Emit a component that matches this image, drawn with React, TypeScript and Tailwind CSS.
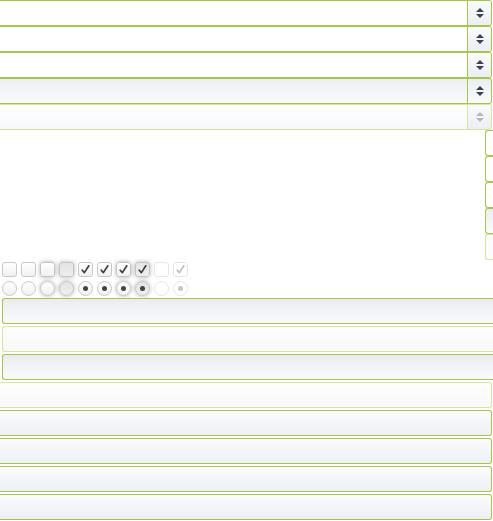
import React from 'react';

type State = 'normal' | 'hover' | 'active' | 'disabled';

const green = 'border-[#a4c64c]';
const lightGreen = 'border-[#d5e4a9]';

function Arrows({ disabled }: { disabled?: boolean }) {
    return (
        <svg width="8" height="10" viewBox="0 0 8 10" className={disabled ? 'fill-[#b4b8c0]' : 'fill-[#3b4252]'}>
            <polygon points="0,4 4,0 8,4" />
            <polygon points="0,6 4,10 8,6" />
        </svg>
    );
}

function Select({ state }: { state: State }) {
    const body =
        state === 'active'
            ? 'bg-gradient-to-b from-[#eceef3] to-[#fafbfc]'
            : state === 'disabled'
              ? 'bg-gradient-to-b from-[#fefefe] to-[#f7f8fa]'
              : 'bg-white';
    const border = state === 'disabled' ? lightGreen : green;
    return (
        <div className={`flex h-[26px] w-[492px] shrink-0 border-y border-r rounded-r-[3px] ${border} ${body}`}>
            <div className="flex-1" />
            <div
                className={`flex w-[24px] items-center justify-center border-l ${border} ${
                    state === 'active' ? '' : 'bg-gradient-to-b from-[#fafbfc] to-[#eceef3]'
                } rounded-r-[2px]`}
            >
                <Arrows disabled={state === 'disabled'} />
            </div>
        </div>
    );
}

function SideBox({ state }: { state: State }) {
    const cls =
        state === 'active'
            ? `${green} bg-gradient-to-b from-[#eceef3] to-[#fafbfc]`
            : state === 'disabled'
              ? `${lightGreen} bg-[#fcfcfc]`
              : `${green} bg-white`;
    return <div className={`h-[26px] w-[8px] border-y border-l rounded-l-[3px] ${cls}`} />;
}

function Check({ light }: { light?: boolean }) {
    return (
        <svg width="11" height="11" viewBox="0 0 11 11" className="block">
            <path
                d="M2.2 6.2 L4.4 8.6 L8.8 1.8"
                fill="none"
                stroke={light ? '#bdbdbd' : '#3f3f3f'}
                strokeWidth="1.7"
                strokeLinecap="round"
                strokeLinejoin="round"
            />
        </svg>
    );
}

function Checkbox({ state, checked }: { state: State; checked?: boolean }) {
    const base =
        state === 'disabled'
            ? 'border-[#e6e6e6] bg-white'
            : state === 'active'
              ? 'border-[#c4c4c4] bg-gradient-to-b from-[#e4e4e4] to-[#eeeeee] shadow-[0_0_4px_rgba(0,0,0,0.3)]'
              : state === 'hover'
                ? 'border-[#c4c4c4] bg-gradient-to-b from-white to-[#f1f1f1] shadow-[0_0_4px_rgba(0,0,0,0.3)]'
                : 'border-[#c8c8c8] bg-gradient-to-b from-white to-[#f1f1f1]';
    return (
        <div className={`flex h-[15px] w-[15px] items-center justify-center rounded-[3px] border ${base}`}>
            {checked && <Check light={state === 'disabled'} />}
        </div>
    );
}

function Radio({ state, checked }: { state: State; checked?: boolean }) {
    const base =
        state === 'disabled'
            ? 'border-[#e6e6e6] bg-white'
            : state === 'active'
              ? 'border-[#c4c4c4] bg-gradient-to-b from-[#e4e4e4] to-[#eeeeee] shadow-[0_0_4px_rgba(0,0,0,0.3)]'
              : state === 'hover'
                ? 'border-[#c4c4c4] bg-gradient-to-b from-white to-[#f1f1f1] shadow-[0_0_4px_rgba(0,0,0,0.3)]'
                : 'border-[#c8c8c8] bg-gradient-to-b from-white to-[#f1f1f1]';
    return (
        <div className={`flex h-[15px] w-[15px] items-center justify-center rounded-full border ${base}`}>
            {checked && (
                <div className={`h-[5px] w-[5px] rounded-full ${state === 'disabled' ? 'bg-[#c4c4c4]' : 'bg-[#444]'}`} />
            )}
        </div>
    );
}

function Button({ state, side }: { state: State; side: 'left' | 'right' }) {
    const bg =
        state === 'active'
            ? `${green} bg-gradient-to-b from-[#eaecf1] to-[#f9fafb]`
            : state === 'disabled'
              ? `${lightGreen} bg-gradient-to-b from-[#fdfdfd] to-[#f8f8f9]`
              : `${green} bg-gradient-to-b from-[#fbfbfd] to-[#eef0f5]`;
    const edge =
        side === 'left'
            ? 'ml-[2px] w-[520px] border-y border-l rounded-l-[3px]'
            : 'w-[492px] border-y border-r rounded-r-[3px]';
    return <div className={`h-[26px] shrink-0 ${edge} ${bg}`} />;
}

const boxStates: Array<{ state: State; checked?: boolean }> = [
    { state: 'normal' },
    { state: 'normal' },
    { state: 'hover' },
    { state: 'active' },
    { state: 'normal', checked: true },
    { state: 'normal', checked: true },
    { state: 'hover', checked: true },
    { state: 'active', checked: true },
    { state: 'disabled' },
    { state: 'disabled', checked: true },
];

export default function App() {
    return (
        <div className="relative h-[521px] w-[493px] overflow-hidden bg-white">
            <div className="flex flex-col">
                <Select state="normal" />
                <Select state="normal" />
                <Select state="normal" />
                <Select state="active" />
                <Select state="disabled" />
            </div>

            <div className="flex h-[132px] justify-end pr-0">
                <div className="flex flex-col">
                    <SideBox state="normal" />
                    <SideBox state="normal" />
                    <SideBox state="normal" />
                    <SideBox state="active" />
                    <SideBox state="disabled" />
                </div>
            </div>

            <div className="flex gap-[4px] pl-[2px]">
                {boxStates.map((b, i) => (
                    <Checkbox key={i} state={b.state} checked={b.checked} />
                ))}
            </div>
            <div className="mt-[4px] flex gap-[4px] pl-[2px]">
                {boxStates.map((b, i) => (
                    <Radio key={i} state={b.state} checked={b.checked} />
                ))}
            </div>

            <div className="mt-[2px] flex flex-col gap-[2px]">
                <Button state="active" side="left" />
                <Button state="disabled" side="left" />
                <Button state="active" side="left" />
                <Button state="disabled" side="right" />
                <Button state="normal" side="right" />
                <Button state="normal" side="right" />
                <Button state="normal" side="right" />
                <Button state="normal" side="right" />
            </div>
        </div>
    );
}
